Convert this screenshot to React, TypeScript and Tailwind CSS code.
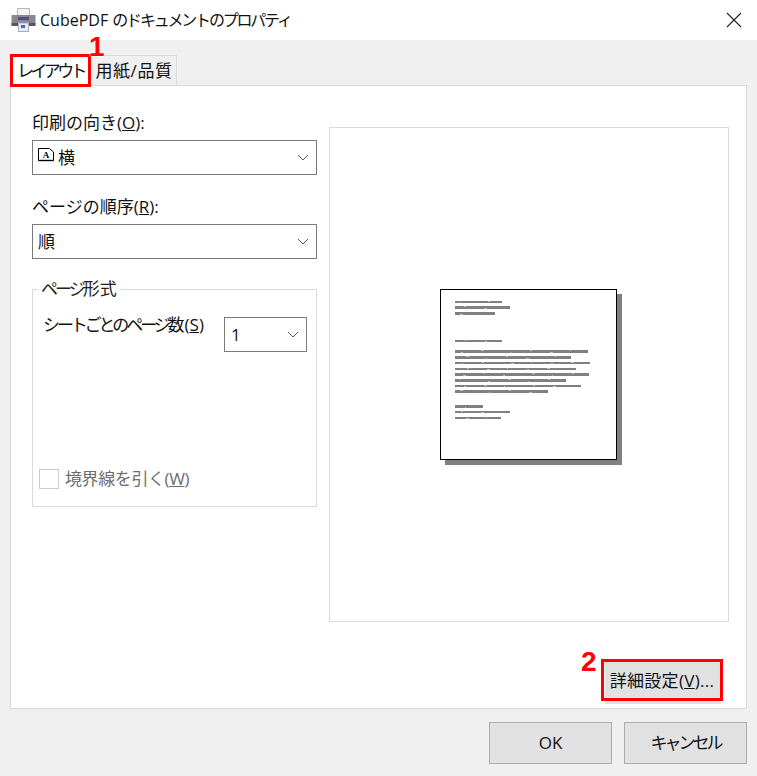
function K({ children, className = "tracking-[-3px]" }: { children: React.ReactNode; className?: string }) {
  return <span className={className}>{children}</span>;
}

function Chevron({ className = "" }: { className?: string }) {
  return (
    <svg width="12" height="7" viewBox="0 0 12 7" className={className}>
      <path d="M1 1 L6 6 L11 1" fill="none" stroke="#555" strokeWidth="1" />
    </svg>
  );
}

function PrinterIcon() {
  return (
    <svg width="25" height="24" viewBox="0 0 25 24" className="shrink-0">
      <rect x="6.5" y="0.5" width="12" height="8" fill="#f4f4f4" stroke="#b8b8b8" />
      <rect x="0.5" y="7" width="24" height="10" fill="#85888e" />
      <rect x="0.5" y="15" width="24" height="3" fill="#54575d" />
      <rect x="7" y="9" width="11" height="3" fill="#5a4a86" />
      <rect x="7.5" y="15" width="10" height="8.5" fill="#e6eaf4" stroke="#a8aec0" />
      <rect x="10" y="17" width="4" height="3" fill="#4a6ac0" />
    </svg>
  );
}

function PageGlyph() {
  return (
    <svg width="16" height="14" viewBox="0 0 16 14" className="shrink-0 -mt-[6px]">
      <path d="M0.5 0.5 H11.5 L15.5 4 V12.5 H0.5 Z" fill="#fff" stroke="#000" />
      <path d="M0.5 12.5 H15.5" stroke="#000" strokeWidth="1.4" />
      <text x="8" y="10" textAnchor="middle" fontSize="9" fontWeight="700" fontFamily="Liberation Serif, serif" fill="#000">A</text>
    </svg>
  );
}

const lines: [number, number, number][] = [
  [12, 72, 2], [17, 80, 3], [23, 65, 3], [51, 72, 2],
  [61, 158, 3], [67, 141, 3], [73, 160, 2], [79, 146, 2],
  [84, 159, 3], [90, 136, 3], [96, 151, 2], [101, 118, 3],
  [116, 53, 3], [122, 80, 2], [128, 71, 2],
];

function Paper() {
  return (
    <div className="mr-[2px] w-[177px] h-[171px] bg-white border-[1.5px] border-black shadow-[5px_5px_0_#808080]">
      <svg width="174" height="168" viewBox="0 0 174 168" className="block">
        {lines.map(([y, end, h], i) => (
          <g key={i}>
            <rect x="14" y={y - 1} width={end - 25} height={h} fill="#808080" />
            {Array.from({ length: Math.floor((end - 25) / 22) }, (_, j) => (
              <rect
                key={j}
                x={18 + j * 22 + ((i * 5 + j * 7) % 9)}
                y={y - 1 + ((i + j) % 2 ? 0 : h - 1)}
                width={1 + ((i + j) % 3)}
                height="1"
                fill="#c4c4c4"
              />
            ))}
          </g>
        ))}
      </svg>
    </div>
  );
}

function Combo({ children, className = "" }: { children: React.ReactNode; className?: string }) {
  return (
    <div className={`h-[35px] bg-white border border-[#7a7a7a] flex items-center justify-between text-[17px] text-[#111] ${className}`}>
      <div className="flex items-center">{children}</div>
      <Chevron className="mr-[7px]" />
    </div>
  );
}

function Button({ children, className = "" }: { children: React.ReactNode; className?: string }) {
  return (
    <div className={`h-[42px] bg-[#e1e1e1] border border-[#adadad] flex items-center justify-center text-[17px] text-[#111] whitespace-nowrap ${className}`}>
      {children}
    </div>
  );
}

export default function App() {
  return (
    <div className="relative w-[757px] h-[776px] bg-[#f0f0f0] overflow-hidden text-[#111] font-['Open_Sans','Noto_Sans_CJK_JP',sans-serif]">
      {/* Title bar */}
      <div className="h-10 bg-white flex items-center pl-[11px] pr-[15px]">
        <PrinterIcon />
        <span className="ml-[4px] text-[16px] whitespace-nowrap">CubePDF <span className="tracking-[-2.2px]">のドキュメントのプロパティ</span></span>
        <svg width="16" height="16" viewBox="0 0 16 16" className="ml-auto">
          <path d="M1 1 L15 15 M15 1 L1 15" stroke="#222" strokeWidth="1.1" fill="none" />
        </svg>
      </div>

      {/* Tabs */}
      <div className="h-[46px] pl-[11px] flex items-end relative z-10">
        <div className="w-[79px] h-[31px] bg-white flex items-center justify-center text-[17px] whitespace-nowrap"><K className="tracking-[-3.6px]">レイアウト</K></div>
        <div className="w-[87px] h-[30px] mb-px bg-[#f0f0f0] border border-b-0 border-[#d9d9d9] flex items-center justify-center text-[17px] whitespace-nowrap pl-[1px] tracking-[0.6px]">用紙/品質</div>
      </div>

      {/* Panel */}
      <div className="mx-[10px] -mt-px w-[737px] h-[624px] bg-white border border-[#d9d9d9] pt-[27px] pl-[21px] pr-[17px] flex flex-col">
        <div className="flex gap-[12px]">
          <div className="w-[285px] flex flex-col">
            <div className="h-[27px] text-[17px] leading-[20px] whitespace-nowrap">印刷の向き(<span className="underline">O</span>):</div>
            <Combo className="pl-[5px]">
              <PageGlyph />
              <span className="ml-[4px]">横</span>
            </Combo>
            <div className="mt-[22px] h-[27px] text-[17px] leading-[20px] whitespace-nowrap">ページの順序(<span className="underline">R</span>):</div>
            <Combo className="pl-[5px]"><span>順</span></Combo>

            <div className="relative mt-[30px] h-[218px] border border-[#d9d9d9] pl-[10px] pr-[9px] pt-[27px]">
              <span className="absolute left-[5px] -top-[11px] bg-white px-[3px] text-[17px] leading-[20px] text-[#222] whitespace-nowrap"><K>ページ</K>形式</span>
              <div className="flex justify-between">
                <span className="text-[17px] leading-[20px] -mt-[2px] whitespace-nowrap"><K className="tracking-[-3.1px]">シートごとのページ</K>数(<span className="underline">S</span>)</span>
                <Combo className="w-[83px] pl-[6px]"><span>1</span></Combo>
              </div>
              <div className="mt-[117px] -ml-[4px] flex items-center gap-[6px]">
                <div className="w-[20px] h-[20px] border border-[#cccccc] bg-white" />
                <span className="text-[17px] leading-[20px] text-[#6d6d6d] whitespace-nowrap tracking-[-0.4px]">境界線を引く(<span className="underline">W</span>)</span>
              </div>
            </div>
          </div>

          <div className="mt-[14px] w-[400px] h-[495px] border border-[#d9d9d9] flex items-center justify-center">
            <Paper />
          </div>
        </div>

        <div className="mt-[40px] flex justify-end">
          <Button className="w-[116px] h-[36px] mr-[8px] border-0 pb-[4px] pr-[2px] tracking-[0.3px]">詳細設定(<span className="underline">V</span>)...</Button>
        </div>
      </div>

      {/* Footer */}
      <div className="mt-[13px] flex justify-end gap-[12px] pr-[10px]">
        <Button className="w-[123px]">OK</Button>
        <Button className="w-[123px]"><K>キャンセル</K></Button>
      </div>

      {/* Annotations */}
      <div className="absolute left-[10px] top-[54px] w-[81px] h-[33px] border-[3px] border-[#ff0000] z-20" />
      <div className="absolute left-[601px] top-[659px] w-[122px] h-[42px] border-[3px] border-[#ff0000] z-20" />
      <span className="absolute left-[89px] top-[31px] z-30 text-[28px] leading-[32px] font-bold text-[#ff0000] font-['Liberation_Sans',sans-serif] [text-shadow:0_0_2px_#fff,0_0_2px_#fff]">1</span>
      <span className="absolute left-[581px] top-[646px] z-30 text-[28px] leading-[32px] font-bold text-[#ff0000] font-['Liberation_Sans',sans-serif]">2</span>
    </div>
  );
}
